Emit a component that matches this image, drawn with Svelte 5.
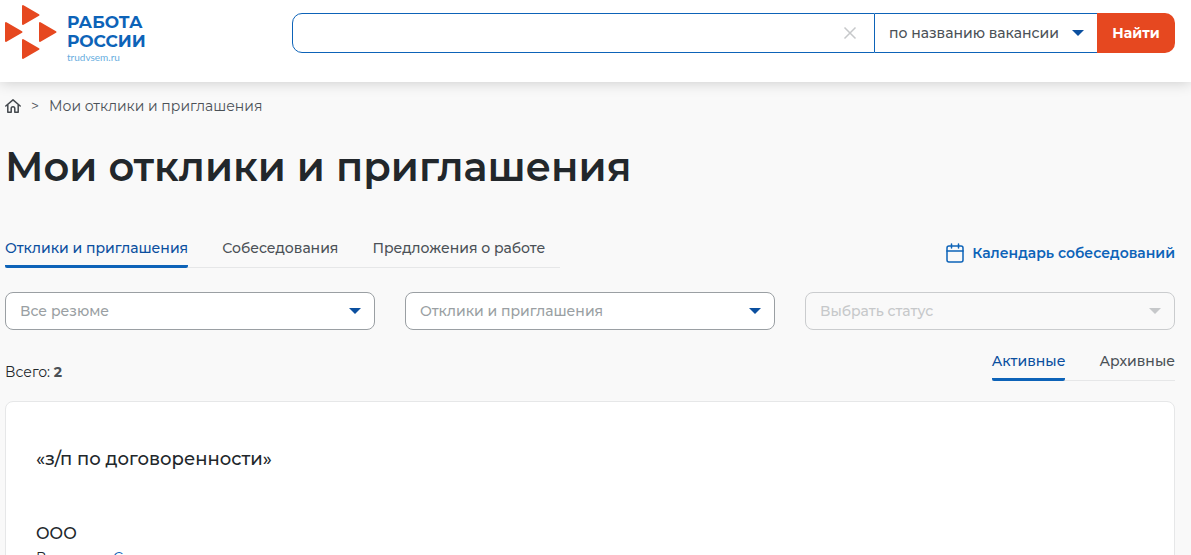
<script lang="ts">
    let query = $state("")
    let searchBy = $state("vacancy")
    let activeTab = $state(0)
    let activeList = $state(0)

    const tabs = ["Отклики и приглашения", "Собеседования", "Предложения о работе"]
    const lists = ["Активные", "Архивные"]
    const total = 2
</script>

<header class="top">
    <a class="logo" href="/" aria-label="Работа России">
        <svg width="52" height="56" viewBox="0 0 52 56" fill="#e64820" stroke="#e64820" stroke-width="2" stroke-linejoin="round">
            <path d="M18 2v18L33.500 11z" />
            <path d="M1 19v18L16.500 28z" />
            <path d="M35 19v18L50.500 28z" />
            <path d="M18 36v18L33.500 45z" />
        </svg>
        <span class="brand">
            <span class="name">РАБОТА</span>
            <span class="name">РОССИИ</span>
            <span class="site">trudvsem.ru</span>
        </span>
    </a>
    <form class="search" onsubmit={(e) => e.preventDefault()}>
        <div class="query">
            <input type="text" aria-label="Поиск" bind:value={query} />
            <button class="clear" type="button" aria-label="Очистить" onclick={() => (query = "")}>
                <svg width="14" height="14" viewBox="0 0 14 14" stroke="#c6c8ca" stroke-width="1.5">
                    <path d="M1.500 1.500l11 11M12.500 1.500l-11 11" />
                </svg>
            </button>
        </div>
        <div class="by">
            <select aria-label="Искать" bind:value={searchBy}>
                <option value="vacancy">по названию вакансии</option>
                <option value="company">по названию компании</option>
            </select>
            <span class="caret"></span>
        </div>
        <button class="find" type="submit">Найти</button>
    </form>
</header>

<main>
    <nav class="crumbs" aria-label="Навигация">
        <a href="/" aria-label="Главная">
            <svg width="16" height="14" viewBox="0 0 16 14" fill="none" stroke="#44494e" stroke-width="1.5" stroke-linecap="round" stroke-linejoin="round">
                <path d="M.8 7L8 .9 15.200 7M2.800 5.500v7.700h3.400V9.500a1.800 1.800 0 0 1 3.600 0v3.700h3.400V5.500" />
            </svg>
        </a>
        <span class="sep">&gt;</span>
        <span>Мои отклики и приглашения</span>
    </nav>

    <h1>Мои отклики и приглашения</h1>

    <div class="bar">
        <div class="tabs" role="tablist">
            {#each tabs as tab, i}
                <button role="tab" aria-selected={activeTab === i} class:active={activeTab === i} onclick={() => (activeTab = i)}>{tab}</button>
            {/each}
        </div>
        <a class="calendar" href="/calendar">
            <svg width="18" height="20" viewBox="0 0 18 20" fill="none" stroke="#0d63b8" stroke-width="1.5" stroke-linecap="round">
                <rect x="1" y="3" width="16" height="16" rx="2" />
                <path d="M1 8h16M5.500 1v4M12.500 1v4" />
            </svg>
            Календарь собеседований
        </a>
    </div>

    <div class="filters">
        <div class="filter">
            <select aria-label="Резюме">
                <option>Все резюме</option>
            </select>
            <span class="caret"></span>
        </div>
        <div class="filter">
            <select aria-label="Тип">
                <option>Отклики и приглашения</option>
            </select>
            <span class="caret"></span>
        </div>
        <div class="filter">
            <select aria-label="Статус" disabled>
                <option>Выбрать статус</option>
            </select>
            <span class="caret"></span>
        </div>
    </div>

    <div class="summary">
        <p>Всего: <b>{total}</b></p>
        <div class="tabs" role="tablist">
            {#each lists as list, i}
                <button role="tab" aria-selected={activeList === i} class:active={activeList === i} onclick={() => (activeList = i)}>{list}</button>
            {/each}
        </div>
    </div>

    <article class="card">
        <h2>«з/п по договоренности»</h2>
        <p class="company">ООО</p>
        <p class="resume">Вакансия: <a href="/vacancy">С</a></p>
    </article>
</main>

<style>
    :global(body) {
        background: #f9f9f9;
        color: #22272b;
        font: 14px/20px Montserrat, Inter, "Liberation Sans", sans-serif;
    }
    :global(html) {
        overflow: hidden;
    }
    h1,
    h2,
    p {
        margin: 0;
    }
    button,
    input,
    select {
        box-sizing: border-box;
        margin: 0;
        padding: 0;
        border: none;
        background: none;
        color: inherit;
        font: inherit;
    }
    button {
        cursor: pointer;
    }
    a {
        color: #0d63b8;
        text-decoration: none;
    }
    .top {
        display: flex;
        align-items: flex-start;
        justify-content: space-between;
        gap: 40px;
        box-sizing: border-box;
        height: 82px;
        padding: 4px 16px 0 5px;
        background: #fff;
        box-shadow: 0 0 14px rgba(0, 0, 0, 0.2);
    }
    .logo {
        display: flex;
        gap: 10px;
    }
    .brand {
        display: flex;
        flex-direction: column;
        padding-top: 9px;
    }
    .name {
        font-size: 17px;
        line-height: 19px;
        font-weight: 700;
    }
    .site {
        color: #68aee0;
        font: 10px/12px Lato, sans-serif;
    }
    .search {
        display: flex;
        flex: 0 1 883px;
        height: 40px;
        margin-top: 9px;
    }
    .query {
        display: flex;
        flex: 1;
        box-sizing: border-box;
        border: 1px solid #0d63b8;
        border-radius: 10px 0 0 10px;
    }
    .query input {
        flex: 1;
        min-width: 0;
        padding: 0 15px;
        outline: none;
    }
    .clear {
        display: grid;
        place-items: center;
        width: 48px;
    }
    .by,
    .filter {
        display: grid;
        align-items: center;
        box-sizing: border-box;
        border: 1px solid #9a9fa3;
        font-weight: 500;
    }
    .by {
        width: 222px;
        border-color: #0d63b8;
        border-width: 1px 0;
        color: #4b5157;
    }
    select {
        grid-area: 1 / 1;
        width: 100%;
        height: 100%;
        padding: 0 14px;
        appearance: none;
        outline: none;
    }
    .caret {
        grid-area: 1 / 1;
        justify-self: end;
        width: 12px;
        height: 6px;
        margin-right: 13px;
        background: #0b4f9f;
        clip-path: polygon(0 0, 100% 0, 50% 100%);
        pointer-events: none;
    }
    .find {
        width: 78px;
        border-radius: 0 10px 10px 0;
        background: #e64820;
        color: #fff;
        font-weight: 700;
    }
    main {
        padding: 14px 16px 0 5px;
    }
    .crumbs {
        display: flex;
        align-items: center;
        gap: 10px;
        color: #4b5157;
    }
    .crumbs a {
        display: flex;
    }
    .sep {
        font-size: 14px;
    }
    h1 {
        margin-top: 26px;
        font-size: 40px;
        line-height: 50px;
        font-weight: 600;
    }
    .bar,
    .summary {
        display: flex;
        align-items: flex-start;
        justify-content: space-between;
    }
    .bar {
        margin-top: 46px;
    }
    .tabs {
        display: flex;
        gap: 34px;
        border-bottom: 1px solid #e6e7e8;
    }
    .bar .tabs {
        padding-right: 15px;
    }
    .tabs button {
        height: 30px;
        margin-bottom: -1px;
        padding-bottom: 7px;
        border-bottom: 3px solid transparent;
        color: #4b5157;
        font-weight: 500;
    }
    .tabs button.active {
        border-radius: 2px;
        border-color: #0d63b8;
        color: #0b4f9f;
    }
    .calendar {
        display: flex;
        align-items: center;
        gap: 8px;
        margin-top: 5px;
        font-weight: 600;
    }
    .filters {
        display: grid;
        grid-template-columns: repeat(3, 1fr);
        gap: 30px;
        margin-top: 24px;
    }
    .filter {
        height: 38px;
        border-radius: 8px;
        background: #fff;
        color: #9a9fa3;
    }
    .filter:has(select:disabled) {
        border-color: #caccce;
        background: none;
    }
    select:disabled {
        color: #c6c8ca;
        opacity: 1;
    }
    select:disabled + .caret {
        background: #c6c8ca;
    }
    .summary {
        margin-top: 21px;
    }
    .summary p {
        margin-top: 11px;
    }
    .summary b {
        color: #4b5157;
        font-weight: 700;
    }
    .card {
        margin-top: 19px;
        padding: 44px 30px 30px;
        border: 1px solid #e6e7e8;
        border-radius: 8px;
        background: #fff;
    }
    h2 {
        font-size: 18px;
        line-height: 26px;
        font-weight: 500;
    }
    .company {
        margin-top: 50px;
        font-size: 16px;
        line-height: 24px;
        font-weight: 500;
    }
    .resume {
        margin-top: 2px;
    }
</style>
